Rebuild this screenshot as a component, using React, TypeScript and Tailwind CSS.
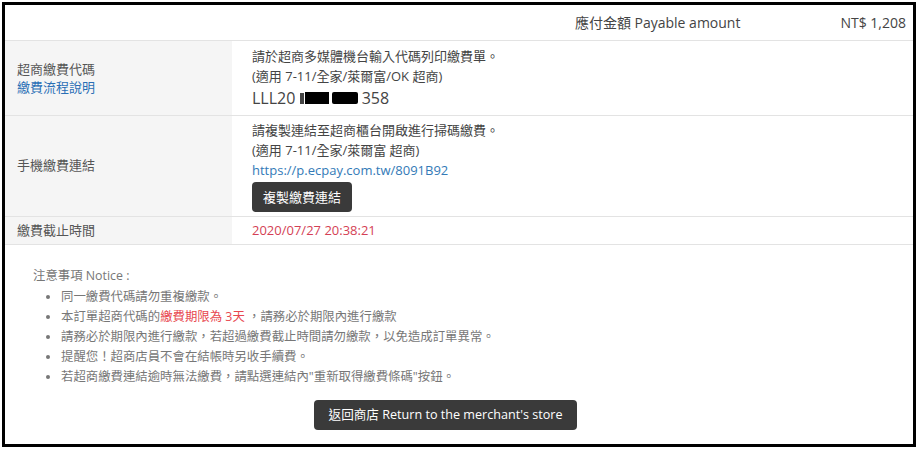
import React from "react";

const font = { fontFamily: '"Open Sans", "Noto Sans CJK TC", sans-serif' };

export default function App() {
  return (
    <div className="w-[919px] h-[452px] bg-white pt-[2px] pl-[2px]" style={font}>
      <div className="w-[914px] h-[445px] border-[3px] border-black flex flex-col">
        {/* header */}
        <div className="h-[36px] flex items-center justify-end gap-[100px] pr-[7px] border-b border-[#e3e3e3] text-[14px] text-[#444]">
          <span>應付金額 Payable amount</span>
          <span>NT$ 1,208</span>
        </div>
        {/* row 1 */}
        <div className="flex border-b border-[#e3e3e3]">
          <div className="w-[227px] bg-[#f5f5f5] pl-[12px] flex flex-col justify-center text-[13px] leading-[18px] text-[#555]">
            <span>超商繳費代碼</span>
            <span className="text-[#2a6fb5]">繳費流程說明</span>
          </div>
          <div className="flex-1 pl-[20px] pt-[5px] pb-[5px] text-[13px] leading-[20px] text-[#444]">
            <div>請於超商多媒體機台輸入代碼列印繳費單。</div>
            <div>(適用 7-11/全家/萊爾富/OK 超商)</div>
            <div className="text-[16px] leading-[24px] flex items-center">
              <span>LLL20&nbsp;</span>
              <span className="inline-block w-[4px] h-[11px] bg-[#444] mr-[1px]"></span>
              <span className="inline-block w-[24px] h-[12px] bg-black"></span>
              <span className="inline-block w-[3px]"></span>
              <span className="inline-block w-[26px] h-[12px] bg-black rounded-[2px]"></span>
              <span>&nbsp;358</span>
            </div>
          </div>
        </div>
        {/* row 2 */}
        <div className="flex border-b border-[#e3e3e3]">
          <div className="w-[227px] bg-[#f5f5f5] pl-[12px] flex items-center text-[13px] text-[#555]">
            手機繳費連結
          </div>
          <div className="flex-1 pl-[20px] pt-[4px] pb-[4px] text-[13px] leading-[20px] text-[#444]">
            <div>請複製連結至超商櫃台開啟進行掃碼繳費。</div>
            <div>(適用 7-11/全家/萊爾富 超商)</div>
            <div className="text-[#337ab7]">https://p.ecpay.com.tw/8091B92</div>
            <div className="mt-[2px] w-[100px] h-[30px] rounded-[4px] bg-[#3a3a3a] text-white text-[13px] flex items-center justify-center">
              複製繳費連結
            </div>
          </div>
        </div>
        {/* row 3 */}
        <div className="flex h-[28px] border-b border-[#e3e3e3]">
          <div className="w-[227px] bg-[#f5f5f5] pl-[12px] flex items-center text-[13px] text-[#555]">
            繳費截止時間
          </div>
          <div className="flex-1 pl-[20px] flex items-center text-[13px] text-[#d43f55]">
            2020/07/27 20:38:21
          </div>
        </div>
        {/* notice */}
        <div className="pl-[28px] pt-[21px] text-[12.4px] leading-[20px] text-[#777]">
          <div>注意事項 Notice :</div>
          <ul className="list-disc pl-[28px] mt-[1px]">
            <li>同一繳費代碼請勿重複繳款。</li>
            <li>
              本訂單超商代碼的<span className="text-[#e8474f]">繳費期限為 3天</span> ，請務必於期限內進行繳款
            </li>
            <li>請務必於期限內進行繳款，若超過繳費截止時間請勿繳款，以免造成訂單異常。</li>
            <li>提醒您！超商店員不會在結帳時另收手續費。</li>
            <li>若超商繳費連結逾時無法繳費，請點選連結內"重新取得繳費條碼"按鈕。</li>
          </ul>
        </div>
        <div className="flex mt-[13px]">
          <div className="w-[263px] h-[30px] ml-[309px] rounded-[4px] bg-[#3a3a3a] text-white text-[12.6px] flex items-center justify-center">
            返回商店 Return to the merchant's store
          </div>
        </div>
      </div>
    </div>
  );
}
